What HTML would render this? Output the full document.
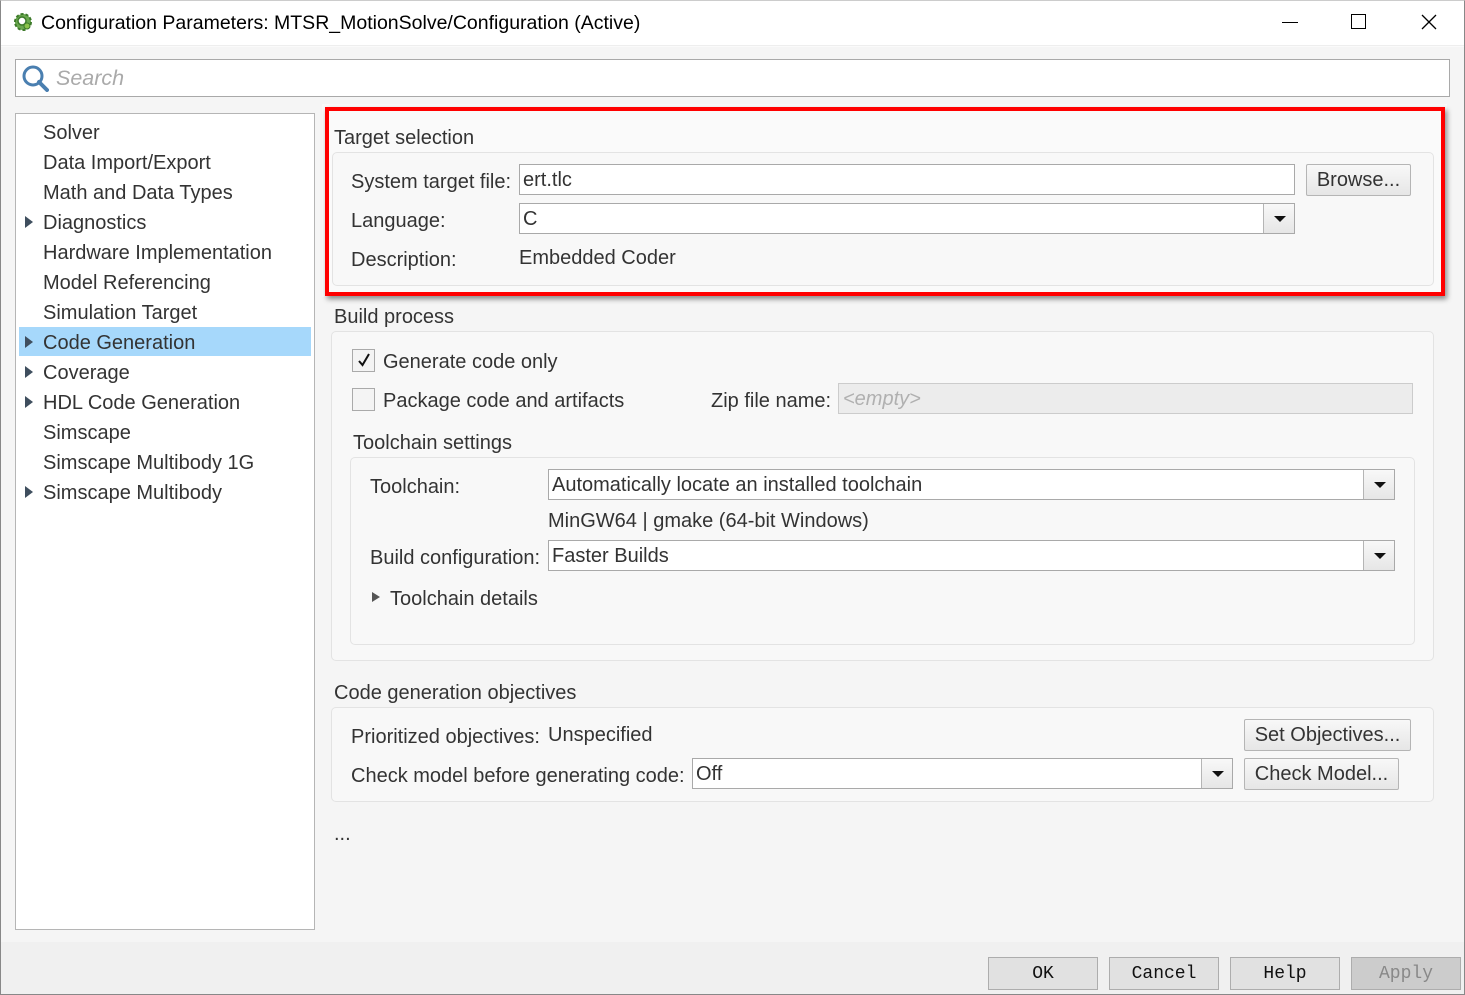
<!DOCTYPE html>
<html><head><meta charset="utf-8"><style>
*{margin:0;padding:0;box-sizing:border-box}
body{width:1465px;height:995px;background:#fafafa;position:relative;overflow:hidden;font-family:"Liberation Sans",Arial,sans-serif;color:#333;font-size:20px}
.a{position:absolute}
.t{position:absolute;line-height:22px;white-space:nowrap;margin-top:1px}
.box{position:absolute;background:#fff;border:1px solid #a9a9a9}
.grp{position:absolute;border:1px solid #e3e3e3;border-radius:5px;background:#f8f8f8}
.btn{position:absolute;border:1px solid #b5b5b5;background:linear-gradient(#f8f8f8,#e6e6e6);border-radius:2px;text-align:center;line-height:30px}
.dd{position:absolute;width:31px;border-left:1px solid #b5b5b5;background:linear-gradient(#f8f8f8,#e6e6e6);right:0;top:0;bottom:0}
.dd:after{content:"";position:absolute;left:10px;top:12px;border-left:6px solid transparent;border-right:6px solid transparent;border-top:6px solid #111}
.tri{position:absolute;width:0;height:0;border-top:6px solid transparent;border-bottom:6px solid transparent;border-left:8px solid #3f4e5e}
.fb{position:absolute;top:957px;height:33px;border:1px solid #adadad;background:#e1e1e1;font-family:"Liberation Mono","Noto Serif CJK SC",monospace;font-size:18px;text-align:center;line-height:33px;color:#111}
</style></head><body>
<div class="a" style="left:0;top:0;width:1465px;height:46px;background:#fff;border-bottom:1px solid #eee"></div>
<svg class="a" style="left:12px;top:11px" width="22" height="22" viewBox="0 0 22 22"><circle cx="11" cy="11" r="8" fill="#6aa84f" stroke="#3d7a2a" stroke-width="2" stroke-dasharray="3 2"/><circle cx="10" cy="10" r="4" fill="#fff" stroke="#3d7a2a" stroke-width="1.5"/><circle cx="15" cy="15" r="3" fill="#8bc34a" stroke="#3d7a2a"/></svg>
<div class="t" style="left:41px;top:11px;font-size:19.5px;color:#000">Configuration Parameters: MTSR_MotionSolve/Configuration (Active)</div>
<div class="a" style="left:1282px;top:22px;width:16px;height:1px;background:#000"></div>
<div class="a" style="left:1351px;top:14px;width:15px;height:15px;border:1px solid #000"></div>
<svg class="a" style="left:1421px;top:14px" width="16" height="16"><path d="M1 1L15 15M15 1L1 15" stroke="#000" stroke-width="1.3"/></svg>
<div class="a" style="left:0;top:47px;width:1465px;height:895px;background:#f5f5f5"></div>
<div class="box" style="left:15px;top:59px;width:1435px;height:38px"></div>
<svg class="a" style="left:21px;top:64px" width="28" height="28"><circle cx="12" cy="12" r="9" fill="none" stroke="#4a7fb0" stroke-width="3"/><path d="M18 18L26 26" stroke="#4a7fb0" stroke-width="4" stroke-linecap="round"/></svg>
<div class="t" style="left:56px;top:66px;font-size:21.5px;font-style:italic;color:#aaa">Search</div>
<div class="box" style="left:15px;top:113px;width:300px;height:817px;border-color:#b5b5b5"></div>
<div class="a" style="left:19px;top:327px;width:292px;height:29px;background:#a6d8fb"></div>
<div class="t" style="left:43px;top:121px">Solver</div>
<div class="t" style="left:43px;top:151px">Data Import/Export</div>
<div class="t" style="left:43px;top:181px">Math and Data Types</div>
<div class="tri" style="left:25px;top:216px"></div><div class="t" style="left:43px;top:211px">Diagnostics</div>
<div class="t" style="left:43px;top:241px">Hardware Implementation</div>
<div class="t" style="left:43px;top:271px">Model Referencing</div>
<div class="t" style="left:43px;top:301px">Simulation Target</div>
<div class="tri" style="left:25px;top:336px"></div><div class="t" style="left:43px;top:331px">Code Generation</div>
<div class="tri" style="left:25px;top:366px"></div><div class="t" style="left:43px;top:361px">Coverage</div>
<div class="tri" style="left:25px;top:396px"></div><div class="t" style="left:43px;top:391px">HDL Code Generation</div>
<div class="t" style="left:43px;top:421px">Simscape</div>
<div class="t" style="left:43px;top:451px">Simscape Multibody 1G</div>
<div class="tri" style="left:25px;top:486px"></div><div class="t" style="left:43px;top:481px">Simscape Multibody</div>

<div class="a" style="left:322px;top:104px;width:1125px;height:193px;background:#fafafa"></div>
<div class="t" style="left:334px;top:126px">Target selection</div>
<div class="grp" style="left:332px;top:152px;width:1102px;height:134px"></div>
<div class="t" style="left:351px;top:170px">System target file:</div>
<div class="box" style="left:519px;top:164px;width:776px;height:31px"></div>
<div class="t" style="left:523px;top:168px">ert.tlc</div>
<div class="btn" style="left:1306px;top:164px;width:105px;height:32px">Browse...</div>
<div class="t" style="left:351px;top:209px">Language:</div>
<div class="box" style="left:519px;top:203px;width:776px;height:31px"><div class="dd"></div></div>
<div class="t" style="left:523px;top:207px">C</div>
<div class="t" style="left:351px;top:248px">Description:</div>
<div class="t" style="left:519px;top:246px">Embedded Coder</div>
<div class="a" style="left:325px;top:107px;width:1120px;height:189px;border:4px solid #f00;box-shadow:2px 3px 5px rgba(0,0,0,.45)"></div>

<div class="t" style="left:334px;top:305px">Build process</div>
<div class="grp" style="left:331px;top:331px;width:1103px;height:330px"></div>
<div class="a" style="left:352px;top:349px;width:23px;height:23px;border:1px solid #aaa;background:#f4f4f4"></div>
<svg class="a" style="left:355px;top:351px" width="18" height="18"><path d="M4 10L7.5 14L14 3" fill="none" stroke="#111" stroke-width="2"/></svg>
<div class="t" style="left:383px;top:350px">Generate code only</div>
<div class="a" style="left:352px;top:388px;width:23px;height:23px;border:1px solid #aaa;background:#f4f4f4"></div>
<div class="t" style="left:383px;top:389px">Package code and artifacts</div>
<div class="t" style="left:711px;top:389px">Zip file name:</div>
<div class="a" style="left:838px;top:383px;width:575px;height:31px;background:#ececec;border:1px solid #ccc"></div>
<div class="t" style="left:843px;top:387px;font-style:italic;color:#b0b0b0">&lt;empty&gt;</div>
<div class="t" style="left:353px;top:431px">Toolchain settings</div>
<div class="grp" style="left:350px;top:457px;width:1065px;height:188px"></div>
<div class="t" style="left:370px;top:475px">Toolchain:</div>
<div class="box" style="left:548px;top:469px;width:847px;height:31px"><div class="dd"></div></div>
<div class="t" style="left:552px;top:473px">Automatically locate an installed toolchain</div>
<div class="t" style="left:548px;top:509px">MinGW64 | gmake (64-bit Windows)</div>
<div class="t" style="left:370px;top:546px">Build configuration:</div>
<div class="box" style="left:548px;top:540px;width:847px;height:31px"><div class="dd"></div></div>
<div class="t" style="left:552px;top:544px">Faster Builds</div>
<div class="a" style="left:372px;top:592px;border-top:5px solid transparent;border-bottom:5px solid transparent;border-left:8px solid #555"></div>
<div class="t" style="left:390px;top:587px">Toolchain details</div>

<div class="t" style="left:334px;top:681px">Code generation objectives</div>
<div class="grp" style="left:331px;top:707px;width:1103px;height:95px"></div>
<div class="t" style="left:351px;top:725px">Prioritized objectives:</div>
<div class="t" style="left:548px;top:723px">Unspecified</div>
<div class="btn" style="left:1244px;top:719px;width:167px;height:32px">Set Objectives...</div>
<div class="t" style="left:351px;top:764px">Check model before generating code:</div>
<div class="box" style="left:692px;top:758px;width:541px;height:31px"><div class="dd"></div></div>
<div class="t" style="left:696px;top:762px">Off</div>
<div class="btn" style="left:1244px;top:758px;width:155px;height:32px">Check Model...</div>
<div class="t" style="left:334px;top:822px">...</div>

<div class="a" style="left:0;top:942px;width:1465px;height:53px;background:#f0f0f0"></div>
<div class="fb" style="left:988px;width:110px">OK</div>
<div class="fb" style="left:1109px;width:110px">Cancel</div>
<div class="fb" style="left:1230px;width:110px">Help</div>
<div class="fb" style="left:1351px;width:110px;background:#cccccc;color:#888">Apply</div>
<div class="a" style="left:0;top:0;width:1465px;height:995px;border:1px solid #888;border-top-color:#ccc"></div>
</body></html>
